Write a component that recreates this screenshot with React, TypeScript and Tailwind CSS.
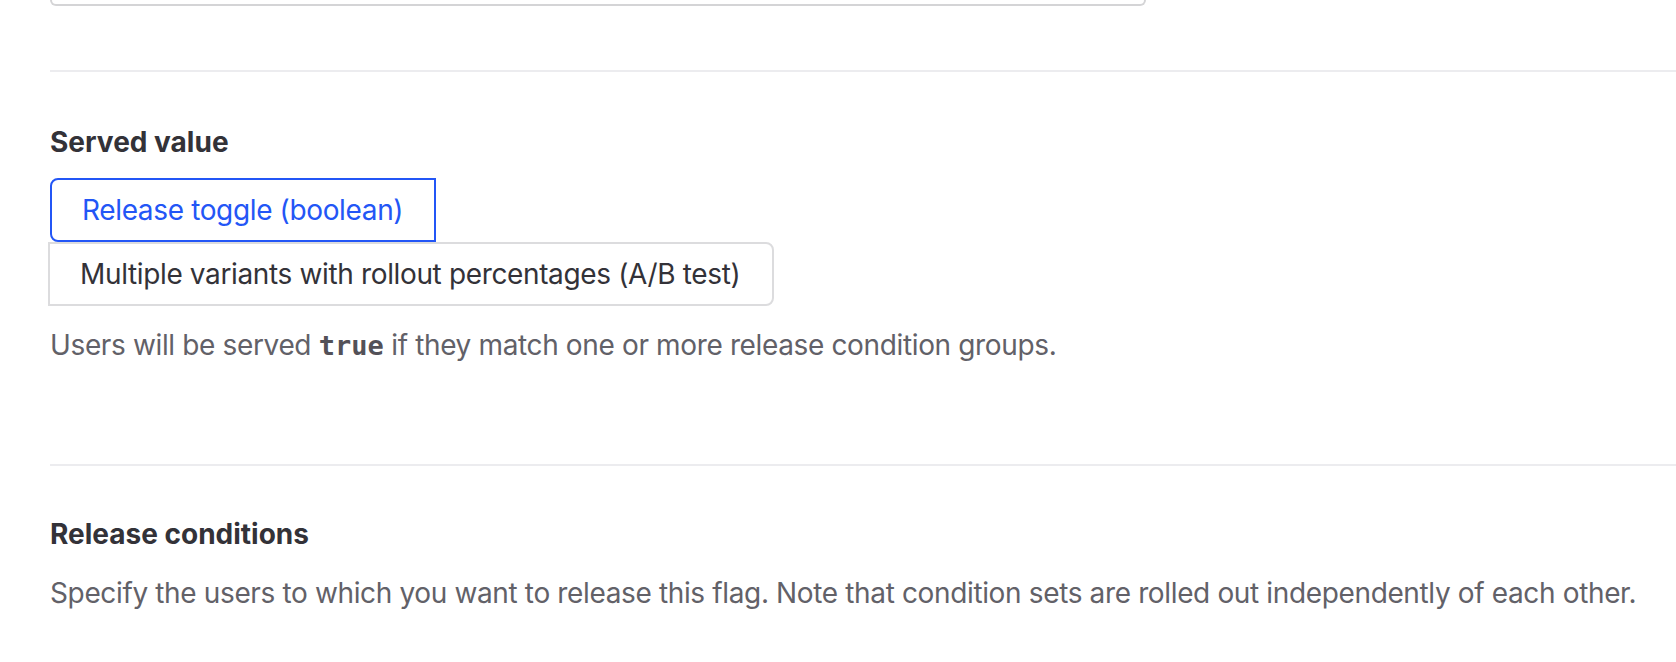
export default function App() {
  return (
    <div className="min-h-[662px] w-full overflow-hidden bg-white font-['Inter',sans-serif] text-[#333238]">
      {/* bottom of the field above, cut off by the viewport */}
      <div className="ml-[50px] h-[6px] w-[1096px] rounded-b-[8px] border-2 border-t-0 border-[#d4d4d6]" />

      <div className="ml-[50px] mt-[64px] h-[2px] bg-[#ececef]" />

      <section className="ml-[50px] pt-[50px]">
        <h2 className="text-[28px] font-bold leading-[40px]">Served value</h2>
        <div className="mt-[16px] flex flex-col items-start tracking-[-0.36px]">
          <button className="h-[64px] w-[386px] rounded-l-[8px] border-2 border-[#2356f6] pl-[30px] text-left text-[28px] leading-[40px] text-[#2356f6]">
            Release toggle (boolean)
          </button>
          <button className="-ml-[2px] h-[64px] w-[726px] rounded-r-[8px] border-2 border-[#dcdcde] pl-[30px] text-left text-[28px] leading-[40px] text-[#333238]">
            Multiple variants with rollout percentages (A/B test)
          </button>
        </div>
        <p className="mt-[19px] h-[40px] text-[28px] leading-[40px] tracking-[-0.36px] text-[#626168]">
          Users will be served{" "}
          <code className="font-['DejaVu_Sans_Mono',monospace] text-[27px] leading-[40px] font-bold tracking-normal text-[#535158]">true</code>{" "}
          if they match one or more release condition groups.
        </p>
      </section>

      <div className="ml-[50px] mt-[99px] h-[2px] bg-[#ececef]" />

      <section className="ml-[50px] pt-[48px]">
        <h2 className="text-[28px] font-bold leading-[40px]">Release conditions</h2>
        <p className="mt-[19px] whitespace-nowrap text-[28px] leading-[40px] tracking-[-0.36px] text-[#626168]">
          Specify the users to which you want to release this flag. Note that condition sets are rolled out independently of each other.
        </p>
      </section>
    </div>
  );
}
